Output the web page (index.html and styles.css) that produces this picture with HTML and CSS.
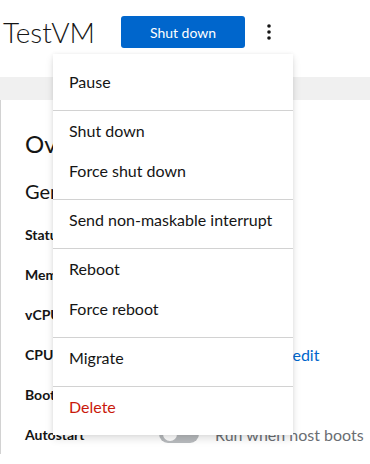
FILE: index.html
```html
<!DOCTYPE html>
<html>
<head>
<meta charset="utf-8">
<link rel="stylesheet" href="styles.css">
</head>
<body>
<header class="head">
  <h1 class="title">TestVM</h1>
  <button class="btn-primary">Shut down</button>
  <button class="kebab" aria-label="Actions">
    <svg width="4" height="16" viewBox="0 0 4 16"><circle cx="2" cy="2" r="1.8"/><circle cx="2" cy="8" r="1.8"/><circle cx="2" cy="14" r="1.8"/></svg>
  </button>
</header>
<div class="band"></div>
<section class="card">
  <h2 class="card-title">Overview</h2>
  <h3 class="sub-title">General</h3>
  <dl class="props">
    <dt class="first">Status</dt><dd class="first">Running</dd>
    <dt>Memory</dt><dd>1 GiB</dd>
    <dt>vCPUs</dt><dd>1</dd>
    <dt>CPU type</dt><dd>host-passthrough<a class="link">edit</a></dd>
    <dt>Boot order</dt><dd>disk</dd>
    <dt>Autostart</dt><dd class="auto"><span class="toggle"><span class="knob"></span></span><span class="muted">Run when host boots</span></dd>
  </dl>
</section>
<ul class="menu">
  <li class="item">Pause</li>
  <li class="divider"></li>
  <li class="item">Shut down</li>
  <li class="item">Force shut down</li>
  <li class="divider"></li>
  <li class="item">Send non-maskable interrupt</li>
  <li class="divider"></li>
  <li class="item">Reboot</li>
  <li class="item">Force reboot</li>
  <li class="divider"></li>
  <li class="item">Migrate</li>
  <li class="divider"></li>
  <li class="item danger">Delete</li>
</ul>
</body>
</html>
```
FILE: styles.css
```css
* { box-sizing: border-box; }
html, body { margin: 0; padding: 0; background: #fff; overflow: hidden; }
body {
  font-family: Lato, "Liberation Sans", sans-serif;
  color: #151515;
  width: 370px;
  height: 464px;
  position: relative;
}
.head {
  height: 77px;
  display: flex;
  align-items: flex-start;
  padding: 16px 0 0 3px;
}
.title {
  margin: 0;
  font-family: Lato, sans-serif;
  font-weight: 300;
  font-size: 28px;
  line-height: 32px;
  width: 118px;
  white-space: nowrap;
}
.btn-primary {
  background: #0066cc;
  color: #fff;
  border: 0;
  border-radius: 3px;
  width: 124px;
  height: 32px;
  font-family: Lato, sans-serif;
  font-size: 14px;
  padding: 0;
}
.kebab {
  background: none;
  border: 0;
  padding: 0;
  margin: 8px 0 0 21px;
  width: 6px;
  height: 16px;
  display: flex;
  justify-content: center;
}
.kebab svg { fill: #151515; }
.band { height: 23px; background: #f0f0f0; }
.card {
  border-left: 1px solid #d2d2d2;
  padding: 24px 0 0 24px;
  background: #fff;
}
.card-title {
  margin: 0;
  font-weight: 400;
  font-size: 24px;
  line-height: 40px;
}
.sub-title {
  margin: 12px 0 0;
  font-weight: 400;
  font-size: 20px;
  line-height: 30px;
}
.props {
  margin: 8px 0 0;
  display: grid;
  grid-template-columns: 134px 1fr;
  grid-auto-rows: 40px;
  align-items: center;
}
.props dt { font-weight: 700; font-size: 14px; }
.props dd { margin: 0; font-size: 14px; white-space: nowrap; }
.props .first { height: 46px; display: flex; align-items: center; }
.link { color: #0066cc; font-size: 16px; margin-left: 26px; }
.auto { display: flex; align-items: center; gap: 16px; }
.toggle {
  width: 40px; height: 18px; border-radius: 9px;
  background: #b8bbbe; position: relative; display: inline-block;
}
.knob {
  position: absolute; left: 4px; top: 2px;
  width: 14px; height: 14px; border-radius: 50%; background: #fff;
}
.muted { color: #6a6e73; font-size: 16px; }
.menu {
  position: absolute;
  left: 53px;
  top: 54px;
  width: 240px;
  margin: 0;
  padding: 8px 0;
  list-style: none;
  background: #fff;
  box-shadow: 0 4px 8px rgba(3,3,3,0.12), 0 0 4px rgba(3,3,3,0.06);
}
.item {
  height: 40px;
  padding: 0 16px 2px;
  display: flex;
  align-items: center;
  font-size: 16px;
  color: #151515;
  white-space: nowrap;
}
.danger { color: #c9190b; }
.divider {
  height: 1px;
  background: #d2d2d2;
  margin-top: 8px;
}
```
